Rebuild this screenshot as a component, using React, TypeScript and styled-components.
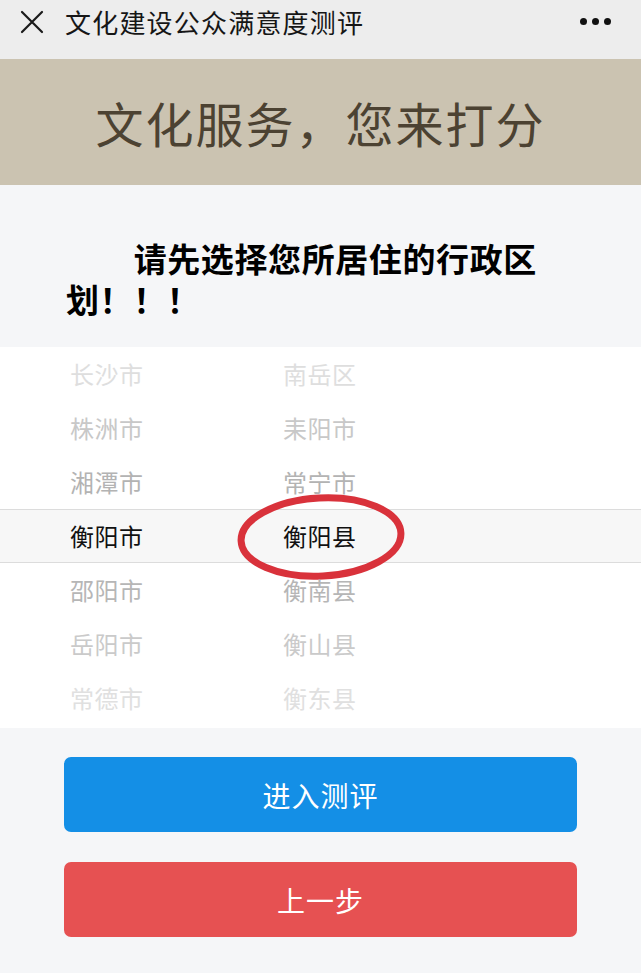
import styled, { createGlobalStyle } from "styled-components";

const GlobalStyle = createGlobalStyle`
  html, body {
    margin: 0;
    padding: 0;
    background: #f5f6f8;
  }
  body {
    font-family: "Noto Sans CJK SC", "Noto Sans", sans-serif;
  }
`;

const Page = styled.div`
  width: 641px;
  height: 973px;
  display: flex;
  flex-direction: column;
  background: #f5f6f8;
  overflow: hidden;
`;

const NavBar = styled.div`
  height: 59px;
  flex-shrink: 0;
  display: flex;
  align-items: center;
  padding: 0 30px 0 19px;
  background: #ededed;
  box-sizing: border-box;
`;

const CloseButton = styled.div`
  width: 26px;
  height: 26px;
  display: flex;
  align-items: center;
  justify-content: center;
  margin-bottom: 16px;
`;

const NavTitle = styled.div`
  margin-left: 20px;
  margin-bottom: 16px;
  font-size: 26px;
  letter-spacing: 1.2px;
  color: #161616;
  flex: 1;
`;

const MoreDots = styled.div`
  display: flex;
  gap: 5px;
  margin-bottom: 16px;

  span {
    width: 7px;
    height: 7px;
    border-radius: 50%;
    background: #111;
  }
`;

const Banner = styled.div`
  height: 126px;
  flex-shrink: 0;
  display: flex;
  align-items: center;
  justify-content: center;
  background: #cbc3b1;
  color: #4c4232;
  font-size: 48px;
  letter-spacing: 2px;
`;

const Intro = styled.div`
  padding: 53px 0 27px 66px;
`;

const Heading = styled.h2`
  margin: 0;
  width: 480px;
  font-size: 33px;
  line-height: 41px;
  font-weight: 700;
  letter-spacing: 0.6px;
  text-indent: 2.05em;
  color: #000;
`;

const Picker = styled.div`
  height: 381px;
  flex-shrink: 0;
  background: #fff;
  box-sizing: border-box;
`;

const PickerRow = styled.div<{ $selected?: boolean; $shade: string }>`
  height: 54px;
  display: grid;
  grid-template-columns: 213px 1fr;
  align-items: center;
  padding-left: 70px;
  box-sizing: border-box;
  font-size: 24px;
  letter-spacing: 0.5px;
  color: ${(p) => p.$shade};
  background: ${(p) => (p.$selected ? "#f7f7f7" : "transparent")};
  border-top: 1px solid ${(p) => (p.$selected ? "#dcdcdc" : "transparent")};
  border-bottom: 1px solid ${(p) => (p.$selected ? "#dcdcdc" : "transparent")};
`;

const Cell = styled.div`
  position: relative;
  line-height: 1;
`;

const Circle = styled.svg`
  position: absolute;
  left: -48px;
  top: -31px;
  width: 172px;
  height: 88px;
  pointer-events: none;
`;

const Footer = styled.div`
  flex: 1;
  display: flex;
  flex-direction: column;
  gap: 30px;
  padding: 29px 64px 0;
`;

const ActionButton = styled.button<{ $tone: string }>`
  height: 75px;
  border: none;
  border-radius: 7px;
  background: ${(p) => p.$tone};
  color: #fff;
  font-family: "Noto Sans CJK SC", "Noto Sans", sans-serif;
  font-size: 28px;
  letter-spacing: 1px;
`;

const rows = [
  { city: "长沙市", county: "南岳区", shade: "#dedede" },
  { city: "株洲市", county: "耒阳市", shade: "#c8c8c8" },
  { city: "湘潭市", county: "常宁市", shade: "#b3b3b3" },
  { city: "衡阳市", county: "衡阳县", shade: "#111111", selected: true },
  { city: "邵阳市", county: "衡南县", shade: "#b6b6b6" },
  { city: "岳阳市", county: "衡山县", shade: "#cacaca" },
  { city: "常德市", county: "衡东县", shade: "#e0e0e0" },
];

const App = () => {
  return (
    <Page>
      <GlobalStyle />
      <NavBar>
        <CloseButton>
          <svg width="24" height="24" viewBox="0 0 24 24">
            <path
              d="M2 2 L22 22 M22 2 L2 22"
              stroke="#1a1a1a"
              strokeWidth="2.2"
              strokeLinecap="round"
            />
          </svg>
        </CloseButton>
        <NavTitle>文化建设公众满意度测评</NavTitle>
        <MoreDots>
          <span />
          <span />
          <span />
        </MoreDots>
      </NavBar>

      <Banner>文化服务，您来打分</Banner>

      <Intro>
        <Heading>请先选择您所居住的行政区划！！！</Heading>
      </Intro>

      <Picker>
        {rows.map((r) => (
          <PickerRow key={r.city} $selected={r.selected} $shade={r.shade}>
            <Cell>{r.city}</Cell>
            <Cell>
              {r.county}
              {r.selected && (
                <Circle viewBox="0 0 172 88">
                  <ellipse
                    cx="86"
                    cy="44"
                    rx="80"
                    ry="39"
                    fill="none"
                    stroke="#d9323b"
                    strokeWidth="7"
                    transform="rotate(-3 86 44)"
                  />
                </Circle>
              )}
            </Cell>
          </PickerRow>
        ))}
      </Picker>

      <Footer>
        <ActionButton $tone="#148fe6">进入测评</ActionButton>
        <ActionButton $tone="#e65152">上一步</ActionButton>
      </Footer>
    </Page>
  );
};

export default App;
